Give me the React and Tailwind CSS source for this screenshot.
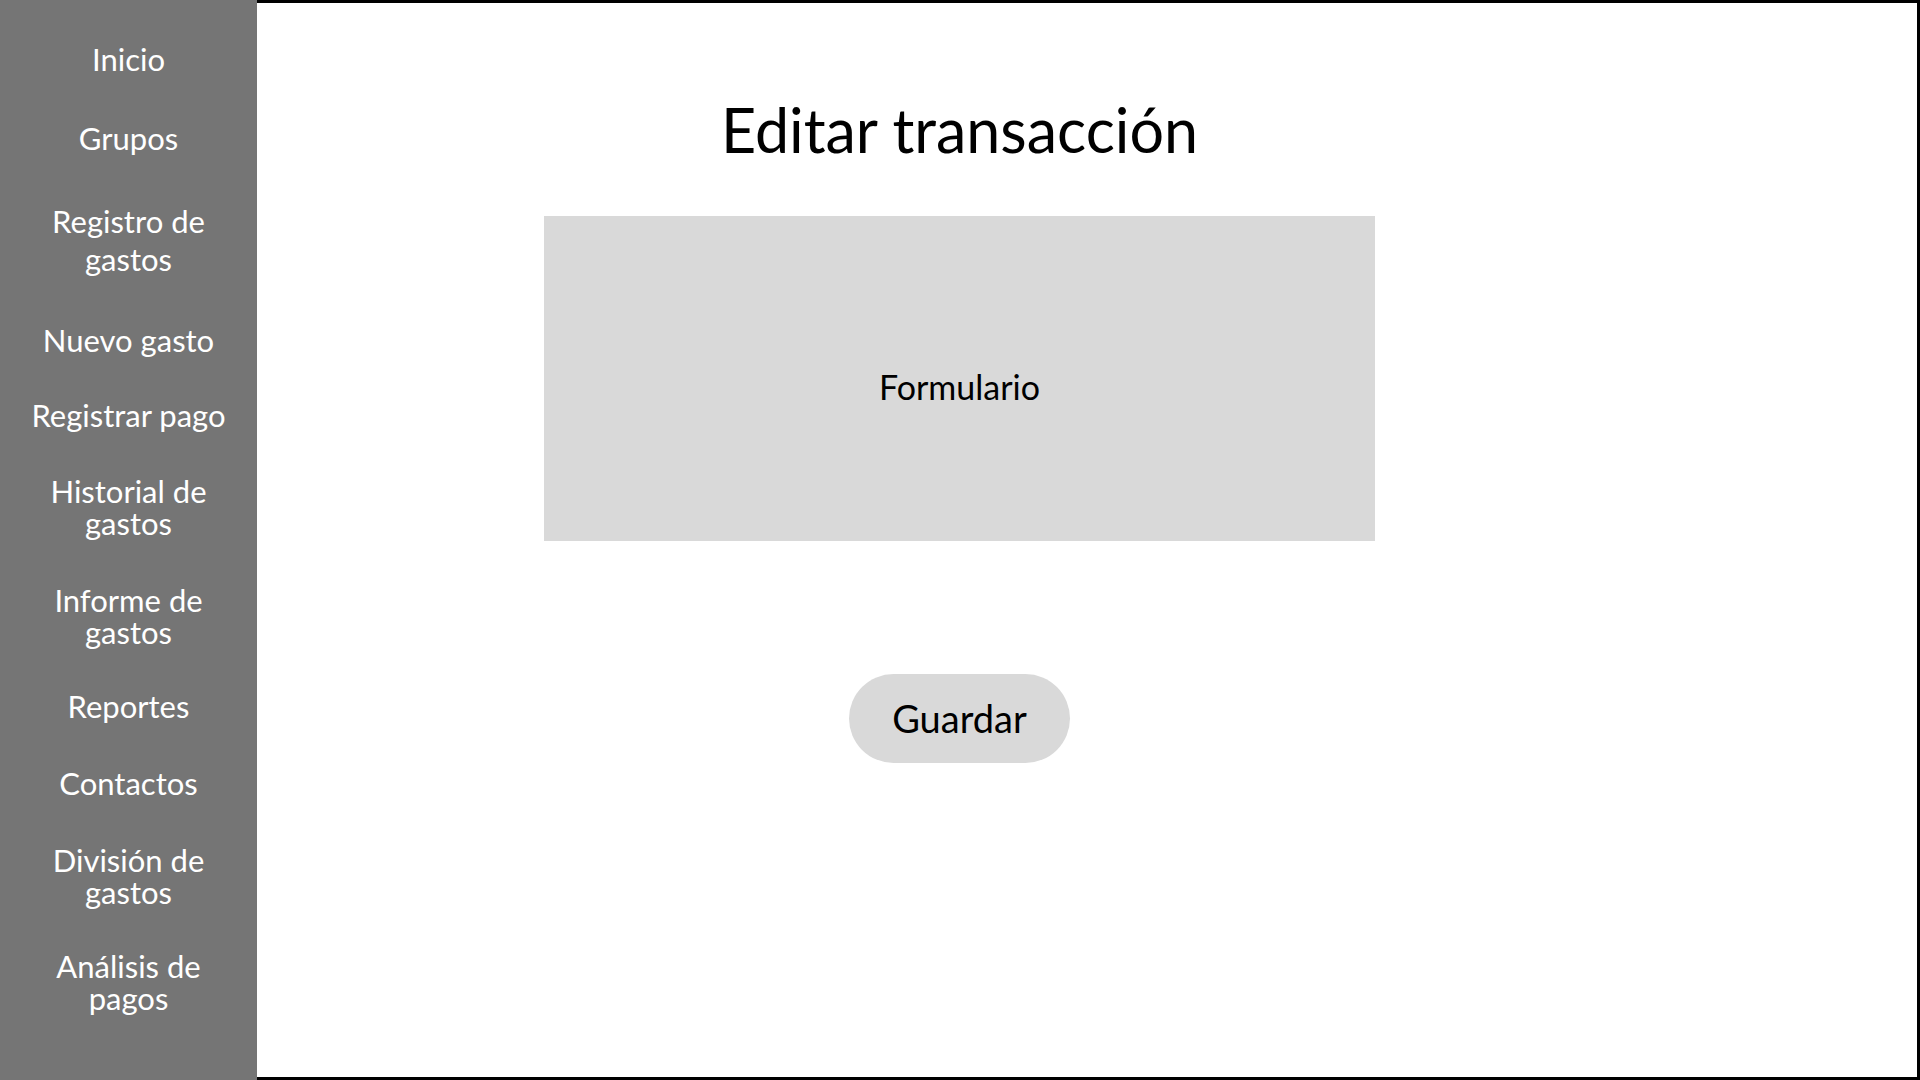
import React from "react";

const items = [
  { lines: ["Inicio"], mt: "mt-[43px]", lh: "leading-[32px]" },
  { lines: ["Grupos"], mt: "mt-[47px]", lh: "leading-[32px]" },
  { lines: ["Registro de", "gastos"], mt: "mt-[48px]", lh: "leading-[38px]" },
  { lines: ["Nuevo gasto"], mt: "mt-[46px]", lh: "leading-[32px]" },
  { lines: ["Registrar pago"], mt: "mt-[43px]", lh: "leading-[32px]" },
  { lines: ["Historial de", "gastos"], mt: "mt-[44px]", lh: "leading-[32px]" },
  { lines: ["Informe de", "gastos"], mt: "mt-[45px]", lh: "leading-[32px]" },
  { lines: ["Reportes"], mt: "mt-[42px]", lh: "leading-[32px]" },
  { lines: ["Contactos"], mt: "mt-[45px]", lh: "leading-[32px]" },
  { lines: ["División de", "gastos"], mt: "mt-[45px]", lh: "leading-[32px]" },
  { lines: ["Análisis de", "pagos"], mt: "mt-[42px]", lh: "leading-[32px]" },
];

export default function App() {
  return (
    <div
      className="flex w-[1920px] h-[1080px] overflow-hidden bg-white"
      style={{ fontFamily: "Lato, 'Open Sans', sans-serif" }}
    >
      <nav className="w-[257px] shrink-0 h-full bg-[#757575] flex flex-col items-center text-white text-[31px]">
        {items.map((it, i) => (
          <div key={i} className={`${it.mt} ${it.lh} text-center`}>
            {it.lines.map((l, j) => (
              <div key={j}>{l}</div>
            ))}
          </div>
        ))}
      </nav>
      <main className="flex-1 h-full border-t-[3px] border-r-[3px] border-b-[3px] border-black">
        <div className="ml-[287px] w-[831px] flex flex-col items-center">
          <h1 className="mt-[87px] text-[61px] leading-[80px] text-black">
            Editar transacción
          </h1>
          <div className="mt-[46px] w-[831px] h-[325px] bg-[#d9d9d9] flex items-center justify-center">
            <span className="text-[34px] leading-[40px] text-black mt-[17px]">Formulario</span>
          </div>
          <button className="mt-[133px] w-[221px] h-[89px] rounded-full bg-[#d9d9d9] text-[38px] text-black flex items-center justify-center">
            Guardar
          </button>
        </div>
      </main>
    </div>
  );
}
